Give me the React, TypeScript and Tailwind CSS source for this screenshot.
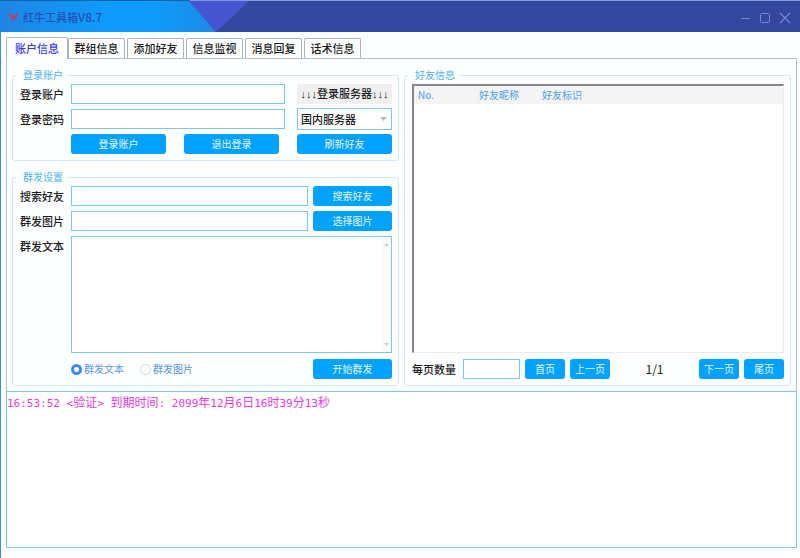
import React, { useState } from 'react';

const TABS = ['账户信息', '群组信息', '添加好友', '信息监视', '消息回复', '话术信息'];

const FIELD = 'h-5 min-w-0 border border-[#7fc6ec] bg-white px-1 text-[11px] focus:outline-none focus:border-[#00a2ff]';

function Button({ children, className = '' }: { children: React.ReactNode; className?: string }) {
  return (
    <button type="button" className={`h-5 shrink-0 rounded-[3px] bg-[#00a2ff] text-[10px] leading-5 text-[#e8f6ff] hover:bg-[#1aacff] ${className}`}>
      {children}
    </button>
  );
}

function Group({ title, children }: { title: string; children: React.ReactNode }) {
  return (
    <fieldset className="min-w-0 rounded-[3px] border border-[#d3e7f8] pt-[3px] pb-[6px] pl-[7px] pr-[6px]">
      <legend className="-ml-1 h-3 pl-[7px] pr-1 text-[10px] leading-3 text-[#4db4ee]">{title}</legend>
      {children}
    </fieldset>
  );
}

function Label({ htmlFor, children }: { htmlFor: string; children: React.ReactNode }) {
  return <label htmlFor={htmlFor} className="mr-[7px] w-11 shrink-0 whitespace-nowrap font-medium leading-5">{children}</label>;
}

function TitleBar() {
  return (
    <header className="relative flex h-8 shrink-0 items-center justify-between bg-[#34479f] pl-2 pr-[9px]">
      <svg className="absolute left-0 top-0" width="260" height="32" viewBox="0 0 260 32" aria-hidden="true">
        <defs>
          <linearGradient id="sky" x1="0" x2="1" y1="0" y2="0">
            <stop offset="0" stopColor="#1d86e4" />
            <stop offset="0.5" stopColor="#0f9bfb" />
            <stop offset="0.72" stopColor="#0f9bfb" />
            <stop offset="1" stopColor="#1c89e4" />
          </linearGradient>
        </defs>
        <path d="M0 0H189L216 32H0Z" fill="url(#sky)" />
        <path d="M188 0H250L216 32Z" fill="#4656d0" />
        <path d="M0 0.5H189" stroke="#0b62a8" />
      </svg>
      <div className="absolute inset-x-0 top-0 ml-[190px] h-px bg-[#7d9be0]" />
      <div className="relative flex items-center gap-1 pt-[2px]">
        <svg width="11" height="10" viewBox="0 0 11 10" aria-hidden="true">
          <path d="M0 0.5L4.2 3.4L5.3 5L6.6 3.2L11 0.5L8.4 5.6L6.6 7.2L5.4 9.8L4 7L1.8 5Z" fill="#c93a5c" />
        </svg>
        <h1 className="text-[11px] font-medium leading-4 text-[#2250b8]">
          红牛工具箱<span className="text-[12px]">V8.7</span>
        </h1>
      </div>
      <div className="relative flex items-center gap-2 pt-1 text-[#7885dc]">
        <button type="button" aria-label="最小化" className="block">
          <svg width="12" height="12" viewBox="0 0 12 12" stroke="currentColor" fill="none"><path d="M2 6.5H11" /></svg>
        </button>
        <button type="button" aria-label="最大化" className="block">
          <svg width="12" height="12" viewBox="0 0 12 12" stroke="currentColor" fill="none"><rect x="1.5" y="1.5" width="9" height="9" rx="1" /></svg>
        </button>
        <button type="button" aria-label="关闭" className="block">
          <svg width="12" height="12" viewBox="0 0 12 12" stroke="currentColor" fill="none" strokeWidth="1.2"><path d="M1 1L11 11M11 1L1 11" /></svg>
        </button>
      </div>
    </header>
  );
}

function LoginGroup() {
  return (
    <Group title="登录账户">
      <div className="flex flex-col gap-[5px]">
        <div className="flex h-5 items-center">
          <Label htmlFor="account">登录账户</Label>
          <input id="account" type="text" className={`flex-1 ${FIELD}`} />
          <label htmlFor="server" className="ml-3 h-5 w-[95px] whitespace-nowrap bg-[#f0f0f1] text-center font-['Liberation_Sans','Noto_Sans_CJK_SC',sans-serif] font-medium leading-5">
            ↓↓↓登录服务器↓↓↓
          </label>
        </div>
        <div className="flex h-5 items-center">
          <Label htmlFor="password">登录密码</Label>
          <input id="password" type="password" className={`flex-1 ${FIELD}`} />
          <div className="relative ml-3 w-[95px]">
            <select id="server" className="block h-[22px] w-full appearance-none border border-[#7fc6ec] bg-white pl-[3px] text-[11px] font-medium focus:outline-none">
              <option>国内服务器</option>
            </select>
            <svg className="pointer-events-none absolute right-[5px] top-[9px]" width="7" height="4" viewBox="0 0 7 4" aria-hidden="true">
              <path d="M0 0H7L3.5 4Z" fill="#b4b8bc" />
            </svg>
          </div>
        </div>
        <div className="ml-[51px] flex justify-between">
          <Button className="w-[95px]">登录账户</Button>
          <Button className="w-[95px]">退出登录</Button>
          <Button className="w-[95px]">刷新好友</Button>
        </div>
      </div>
    </Group>
  );
}

function SendGroup() {
  const [mode, setMode] = useState('text');
  const radio = 'size-[11px] appearance-none rounded-full border border-[#dcd6dc] bg-white checked:border-[3px] checked:border-[#3a8bee]';

  return (
    <Group title="群发设置">
      <div className="flex flex-col gap-[5px]">
        <div className="flex items-center">
          <Label htmlFor="search">搜索好友</Label>
          <input id="search" type="text" className={`flex-1 ${FIELD}`} />
          <Button className="ml-[5px] w-[79px]">搜索好友</Button>
        </div>
        <div className="flex items-center">
          <Label htmlFor="picture">群发图片</Label>
          <input id="picture" type="text" className={`flex-1 ${FIELD}`} />
          <Button className="ml-[5px] w-[79px]">选择图片</Button>
        </div>
        <div className="flex items-start">
          <Label htmlFor="message">群发文本</Label>
          <div className="relative flex-1">
            <textarea id="message" className="block h-[117px] w-full resize-none border border-[#7fc6ec] bg-white p-1 text-[11px] focus:outline-none" />
            <div className="pointer-events-none absolute inset-y-px right-px flex w-[9px] flex-col items-center justify-between bg-[#fbfbfb] py-[6px]">
              <svg width="5" height="3" viewBox="0 0 5 3" aria-hidden="true"><path d="M0 3H5L2.5 0Z" fill="#c8ccd0" /></svg>
              <svg width="5" height="3" viewBox="0 0 5 3" aria-hidden="true"><path d="M0 0H5L2.5 3Z" fill="#c8ccd0" /></svg>
            </div>
          </div>
        </div>
        <div className="ml-[51px] flex items-center pt-px text-[10px] leading-5 text-[#5596e6]">
          <label className="flex items-center gap-[2px]">
            <input type="radio" name="mode" checked={mode === 'text'} onChange={() => setMode('text')} className={radio} />
            群发文本
          </label>
          <label className="ml-4 flex items-center gap-[2px]">
            <input type="radio" name="mode" checked={mode === 'picture'} onChange={() => setMode('picture')} className={radio} />
            群发图片
          </label>
          <Button className="ml-auto w-[79px]">开始群发</Button>
        </div>
      </div>
    </Group>
  );
}

function FriendsGroup() {
  return (
    <Group title="好友信息">
      <div className="flex h-full flex-col gap-[6px]">
        <div className="flex-1 border-b border-l-2 border-r border-t-2 border-b-[#ececf0] border-l-[#85858a] border-r-[#ececf0] border-t-[#85858a] bg-white">
          <table className="w-full table-fixed text-left text-[10px] leading-[18px] text-[#4a9fe6]">
            <thead>
              <tr className="bg-[#f4f4f5]">
                <th className="w-[61px] pl-1 font-normal">No.</th>
                <th className="w-[63px] pl-1 font-normal">好友昵称</th>
                <th className="pl-1 font-normal">好友标识</th>
              </tr>
            </thead>
            <tbody />
          </table>
        </div>
        <div className="flex items-center gap-[5px]">
          <label htmlFor="page-size" className="mr-[2px] whitespace-nowrap font-medium leading-5">每页数量</label>
          <input id="page-size" type="text" className={`w-[57px] ${FIELD}`} />
          <Button className="w-10">首页</Button>
          <Button className="w-10">上一页</Button>
          <span className="flex-1 text-center text-[12px] leading-5">1/1</span>
          <Button className="w-10">下一页</Button>
          <Button className="w-10">尾页</Button>
        </div>
      </div>
    </Group>
  );
}

export default function App() {
  const [tab, setTab] = useState(TABS[0]);

  return (
    <div className="flex min-h-screen flex-col bg-[#fdfeff] font-['Noto_Sans_CJK_SC',sans-serif] text-[11px] text-[#1c1c1e]">
      <TitleBar />
      <main className="flex flex-1 flex-col border-l border-[#3c8fd4] pb-[10px] pl-[5px] pr-[3px] pt-[5px]">
        <nav className="flex h-[21px] items-end gap-[2px]">
          {TABS.map(name => (
            <button
              type="button"
              key={name}
              onClick={() => setTab(name)}
              className={tab === name
                ? 'relative -mr-[2px] h-[22px] w-[62px] translate-y-px rounded-t-[2px] border border-b-0 border-[#a9b6bc] bg-[#fdfeff] font-medium text-[#3a36e8]'
                : 'h-5 w-[57px] rounded-t-[2px] border border-b-0 border-[#a9b6bc] bg-white font-medium'}
            >
              {name}
            </button>
          ))}
        </nav>
        <section className="grid grid-cols-2 gap-[5px] border border-b-0 border-[#b4c3cb] px-[5px] pb-[5px] pt-[10px]">
          <div className="flex min-w-0 flex-col gap-[10px]">
            <LoginGroup />
            <SendGroup />
          </div>
          <FriendsGroup />
        </section>
        <section aria-label="日志" className="flex-1 border border-[#7fc6ec] bg-white pt-px font-['DejaVu_Sans_Mono','Noto_Sans_CJK_SC',monospace] text-[11px] leading-5 text-[#e43be4]">
          <p>
            16:53:52 &lt;<span className="text-[12px]">验证</span>&gt; <span className="text-[12px]">到期时间</span>: 2099<span className="text-[12px]">年</span>12<span className="text-[12px]">月</span>6<span className="text-[12px]">日</span>16<span className="text-[12px]">时</span>39<span className="text-[12px]">分</span>13<span className="text-[12px]">秒</span>
          </p>
        </section>
      </main>
    </div>
  );
}
